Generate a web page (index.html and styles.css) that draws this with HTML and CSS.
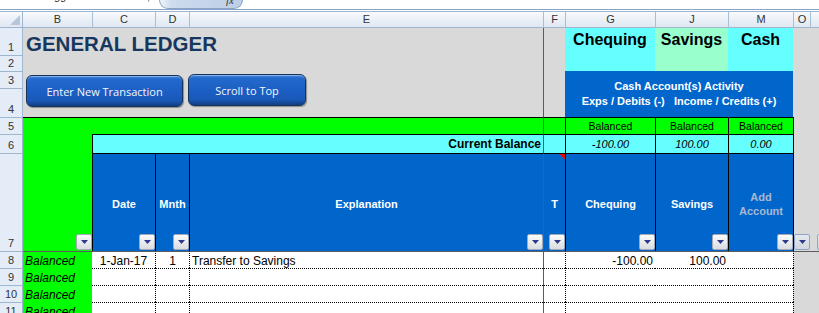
FILE: index.html
```html
<!DOCTYPE html>
<html lang="en">
<head>
<meta charset="utf-8">
<title>General Ledger</title>
<link rel="stylesheet" href="styles.css">
</head>
<body>
<div class="fbar">
  <div class="fbar-row">
    <div class="namebox"><span class="clip-text">gg</span></div>
    <div class="fbar-mid"><span class="clip-text">,</span></div>
    <div class="fx-tab"><span class="fx">fx</span></div>
  </div>
  <div class="fbar-line"></div>
</div>

<div class="sheet">
  <div class="row">
    <div class="ch corner"><svg width="22" height="15" viewBox="0 0 22 15"><path d="M20 3V13H10Z" fill="#b6c7dd"/></svg></div>
    <div class="ch first">B</div>
    <div class="ch">C</div>
    <div class="ch">D</div>
    <div class="ch">E</div>
    <div class="ch">F</div>
    <div class="ch">G</div>
    <div class="ch">J</div>
    <div class="ch">M</div>
    <div class="ch">O</div>
    <div class="ch"></div>
  </div>

  <div class="row">
    <div class="rh first">1</div>
    <div class="title c4">GENERAL LEDGER</div>
    <div class="fz r2"></div>
    <div class="acct cyan">Chequing</div>
    <div class="acct mint">Savings</div>
    <div class="acct cyan">Cash</div>
  </div>

  <div class="row">
    <div class="rh">2</div>
  </div>

  <div class="row">
    <div class="rh">3</div>
    <div class="btns c4 r2">
      <div class="btn b1">Enter New Transaction</div>
      <div class="btn b2">Scroll to Top</div>
    </div>
    <div class="fz r2"></div>
    <div class="activity c3 r2 blue">Cash Account(s) Activity
Exps / Debits (-)   Income / Credits (+)</div>
  </div>

  <div class="row">
    <div class="rh">4</div>
  </div>

  <div class="row">
    <div class="rh">5</div>
    <div class="c4 green bt"></div>
    <div class="green bt fz"></div>
    <div class="bal green bt bl">Balanced</div>
    <div class="bal green bt bl">Balanced</div>
    <div class="bal green bt bl">Balanced</div>
    <div class="edge"></div>
  </div>

  <div class="row">
    <div class="rh">6</div>
    <div class="green"></div>
    <div class="cur c3 cyan bt bl">Current Balance</div>
    <div class="cyan bt fz"></div>
    <div class="val cyan bt bl">-100.00</div>
    <div class="val cyan bt bl">100.00</div>
    <div class="val cyan bt bl">0.00</div>
    <div class="edge"></div>
  </div>

  <div class="row">
    <div class="rh">7</div>
    <div class="green fcell">
      <span class="flt"><svg width="7" height="4" viewBox="0 0 7 4"><path d="M0 0H7L3.5 4Z"/></svg></span>
    </div>
    <div class="hd bl">
      <span class="lbl">Date</span>
      <span class="flt"><svg width="7" height="4" viewBox="0 0 7 4"><path d="M0 0H7L3.5 4Z"/></svg></span>
    </div>
    <div class="hd bl">
      <span class="lbl">Mnth</span>
      <span class="flt"><svg width="7" height="4" viewBox="0 0 7 4"><path d="M0 0H7L3.5 4Z"/></svg></span>
    </div>
    <div class="hd bl">
      <span class="lbl">Explanation</span>
      <span class="flt"><svg width="7" height="4" viewBox="0 0 7 4"><path d="M0 0H7L3.5 4Z"/></svg></span>
    </div>
    <div class="hd note fz">
      <span class="lbl">T</span>
      <span class="flt"><svg width="7" height="4" viewBox="0 0 7 4"><path d="M0 0H7L3.5 4Z"/></svg></span>
    </div>
    <div class="hd bl">
      <span class="lbl">Chequing</span>
      <span class="flt"><svg width="7" height="4" viewBox="0 0 7 4"><path d="M0 0H7L3.5 4Z"/></svg></span>
    </div>
    <div class="hd bl">
      <span class="lbl">Savings</span>
      <span class="flt"><svg width="7" height="4" viewBox="0 0 7 4"><path d="M0 0H7L3.5 4Z"/></svg></span>
    </div>
    <div class="hd bl add">
      <span class="lbl">Add<br>Account</span>
      <span class="flt"><svg width="7" height="4" viewBox="0 0 7 4"><path d="M0 0H7L3.5 4Z"/></svg></span>
    </div>
    <div class="edge fcell">
      <span class="flt dim"><svg width="7" height="4" viewBox="0 0 7 4"><path d="M0 0H7L3.5 4Z"/></svg></span>
    </div>
    <div class="fcell">
      <span class="flt dim peek"><svg width="7" height="4" viewBox="0 0 7 4"><path d="M0 0H7L3.5 4Z"/></svg></span>
    </div>
  </div>

  <div class="row r8">
    <div class="rh">8</div>
    <div class="bb green">Balanced</div>
    <div class="d dt ctr">1-Jan-17</div>
    <div class="d dt dl ctr">1</div>
    <div class="d dt dl lt">Transfer to Savings</div>
    <div class="d dt fz"></div>
    <div class="d dt dl rt">-100.00</div>
    <div class="d dt rt">100.00</div>
    <div class="d dt"></div>
    <div class="edge-dot"></div>
    <div></div>
  </div>

  <div class="row rd">
    <div class="rh">9</div>
    <div class="bb green">Balanced</div>
    <div class="d dt"></div>
    <div class="d dt dl"></div>
    <div class="d dt dl"></div>
    <div class="d dt fz"></div>
    <div class="d dt dl"></div>
    <div class="d dt"></div>
    <div class="d dt"></div>
    <div class="edge-dot"></div>
  </div>

  <div class="row rd">
    <div class="rh">10</div>
    <div class="bb green">Balanced</div>
    <div class="d dt"></div>
    <div class="d dt dl"></div>
    <div class="d dt dl"></div>
    <div class="d dt fz"></div>
    <div class="d dt dl"></div>
    <div class="d dt"></div>
    <div class="d dt"></div>
    <div class="edge-dot"></div>
  </div>

  <div class="row rd">
    <div class="rh">11</div>
    <div class="bb green">Balanced</div>
    <div class="d dt"></div>
    <div class="d dt dl"></div>
    <div class="d dt dl"></div>
    <div class="d dt fz"></div>
    <div class="d dt dl"></div>
    <div class="d dt"></div>
    <div class="d dt"></div>
    <div class="edge-dot"></div>
  </div>
</div>
</body>
</html>
```

FILE: styles.css
```css
* { box-sizing: border-box; margin: 0; padding: 0; }
html, body { width: 819px; height: 313px; overflow: hidden; background: #fff; }
body { font-family: "Liberation Sans", Arial, sans-serif; color: #000; }

/* formula bar remnant */
.fbar { height: 11px; background: #fff; }
.fbar-row { display: flex; height: 9px; overflow: hidden; }
.namebox { width: 147px; padding-left: 54px; }
.fbar-mid { width: 12px; }
.clip-text { display: block; font-size: 11px; line-height: 11px; margin-top: -9px; color: #222; }
.fx-tab {
  width: 84px; height: 9px;
  border: 1px solid #8aa3c5; border-top: 0;
  border-radius: 0 0 9px 9px;
  background: linear-gradient(90deg, #f2f6fb 0, #cddbee 14%, #bccee6 100%);
  display: flex; justify-content: flex-end; padding-right: 8px; overflow: hidden;
}
.fx { font: italic 11px/11px "Liberation Serif", serif; margin-top: -5px; color: #333; }
.fbar-line { height: 1px; background: #8aa4c8; }

/* sheet grid */
.sheet {
  display: grid;
  grid-template-columns: 23px 69px 63px 34px 354px 22px 90px 73px 65px 17px 1fr;
  grid-template-rows: 17px 27px 16px 17px 29px 17px 19px 98px 17px 17px 17px 17px;
  background: #d9d9d9;
}
.row { display: contents; }

.ch {
  background: linear-gradient(#f8fafd, #dfe7f2);
  border-top: 1px solid #9eb6ce;
  border-bottom: 1px solid #9eb6ce;
  border-left: 1px solid #a9bdd6;
  font-size: 11px; line-height: 15px; text-align: center; color: #333;
}
.ch.corner { border-left: 0; border-right: 1px solid #9eb6ce; }
.ch.corner svg { display: block; }
.ch.first { border-left: 0; }

.rh {
  grid-column: 1;
  background: #e4ecf7;
  border-right: 1px solid #9eb6ce;
  border-top: 1px solid #9eb6ce;
  font-size: 11px; line-height: 13px; color: #333;
  display: flex; align-items: flex-end; justify-content: center;
  padding-bottom: 1px;
}
.rh.first { border-top: 0; }

/* spans */
.c3 { grid-column: span 3; }
.c4 { grid-column: span 4; }
.r2 { grid-row: span 2; }

/* fills */
.green { background: #00ff00; }
.cyan { background: #66ffff; }
.mint { background: #99ffcc; }
.blue { background: #0066cc; }

/* borders */
.bt { border-top: 1px solid #000; }
.bl { border-left: 1px solid #000; }
.edge { border-left: 1px solid #000; }
.edge-dot { border-left: 1px dotted #000; }
.dl { border-left: 1px dotted #000; }

/* title and account names */
.title {
  font: bold 20.5px/24px "Liberation Sans", Arial, sans-serif;
  color: #17375e; padding: 4px 0 0 3px; white-space: nowrap;
}
.acct {
  grid-row: span 2;
  font: bold 16px/18px "Liberation Sans", Arial, sans-serif;
  text-align: center; padding-top: 3px;
}

/* buttons */
.btns { display: flex; gap: 5px; padding: 3px 0 0 3px; align-items: flex-start; }
.btn {
  height: 32px;
  border: 1px solid #16335c;
  border-radius: 6px;
  background: linear-gradient(#4a8ce0 0, #2369cc 10%, #1b5ec3 55%, #1a58b8 82%, #123f80 100%);
  box-shadow: inset 0 1px 0 rgba(255,255,255,.35), 1px 1px 1px rgba(0,0,0,.35);
  color: #f4f7fc;
  font: 11px "Open Sans", "Noto Sans", sans-serif;
  display: flex; align-items: center; justify-content: center;
}
.btn.b1 { width: 157px; margin-top: 1px; }
.btn.b2 { width: 118px; }

/* activity block */
.activity {
  display: flex; flex-direction: column; justify-content: center; align-items: center;
  color: #fff; font: bold 11px/15px "Liberation Sans", Arial, sans-serif;
  white-space: pre; text-align: center;
}

/* row 5 / 6 */
.bal { text-align: center; font-size: 10.5px; line-height: 15px; padding-top: 1px; }
.val { text-align: center; font: italic 11px/17px "Liberation Sans", Arial, sans-serif; padding-top: 1px; }
.cur { text-align: right; padding: 1px 2px 0 0; font: bold 12px/17px "Liberation Sans", Arial, sans-serif; }

/* header row 7 */
.fcell { display: grid; grid-template: minmax(0,1fr) / minmax(0,1fr); }
.hd {
  display: grid; grid-template: minmax(0,1fr) / minmax(0,1fr);
  background: #0066cc; border-top: 1px solid #000;
  color: #fff; font: bold 11px/14px "Liberation Sans", Arial, sans-serif; text-align: center;
}
.hd.note {
  background: linear-gradient(to bottom left, #ff0000 50%, transparent 50%) no-repeat top right / 6px 6px, #0066cc;
}
.lbl { grid-area: 1 / 1; align-self: center; justify-self: center; margin-top: 2px; }
.hd.add .lbl { color: #a9b8cf; }
.flt {
  grid-area: 1 / 1; align-self: end; justify-self: end;
  width: 16px; height: 16px; margin-bottom: 1px;
  border: 1px solid #a2aab8; border-radius: 2px;
  background: linear-gradient(#fbfbfb, #d9dce1);
  display: flex; align-items: center; justify-content: center;
}
.flt svg { display: block; fill: #2c3a8e; }
.flt.dim { background: linear-gradient(#e4e8ee, #d2d7df); border-color: #8ea5c8; }
.flt.peek { justify-self: start; margin-left: 7px; }

/* data rows */
.d {
  background: #fff; font-size: 12px; line-height: 14px;
  display: flex; align-items: flex-end;
}
.bb {
  font: italic 12px/14px "Liberation Sans", Arial, sans-serif;
  display: flex; align-items: flex-end; padding-left: 2px;
}
.ctr { justify-content: center; }
.rt { justify-content: flex-end; padding-right: 2px; }
.lt { padding-left: 2px; }

.r8 > :not(.rh) { border-top: 1px solid #5c5c5c; }
.rd > .dt { border-top: 1px dotted #000; }

/* freeze-pane column line */
.fz { border-left: 1px solid #5c5c5c; }
```
